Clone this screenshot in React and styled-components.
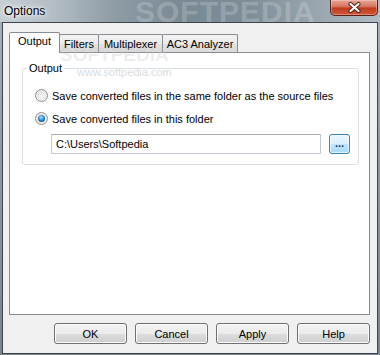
import React from "react";
import styled, { createGlobalStyle } from "styled-components";

const GlobalStyle = createGlobalStyle`
  html, body {
    margin: 0;
    padding: 0;
    background: #7f8f9a;
  }
  body {
    font-family: "Liberation Sans", Arial, sans-serif;
    font-size: 11px;
    color: #000;
  }
`;

const Window = styled.div`
  width: 380px;
  height: 355px;
  display: flex;
  flex-direction: column;
  overflow: hidden;
  background: linear-gradient(180deg, #a7b3bc 0%, #8b99a4 45%, #77858f 100%);
`;

const TitleBar = styled.div`
  position: relative;
  flex: none;
  height: 22px;
  display: flex;
  align-items: flex-start;
  overflow: hidden;
  background: linear-gradient(
    90deg,
    #c6ced4 0%,
    #b3bdc4 14%,
    #8e9ca6 30%,
    #7a8a95 48%,
    #7e8e99 66%,
    #97a4ad 82%,
    #b1bcc3 100%
  );
`;

const Title = styled.div`
  position: relative;
  z-index: 1;
  padding: 4px 0 0 4px;
  font-size: 12px;
  line-height: 14px;
  color: #000;
  text-shadow: 0 0 3px #fff, 0 0 6px rgba(255, 255, 255, 0.9), 0 0 10px rgba(255, 255, 255, 0.7);
`;

const TitleWatermark = styled.div`
  position: absolute;
  left: 135px;
  top: -3px;
  font-size: 30px;
  line-height: 30px;
  font-weight: bold;
  letter-spacing: 1px;
  color: rgba(255, 255, 255, 0.2);
  pointer-events: none;
`;

const CloseButton = styled.div`
  position: relative;
  z-index: 1;
  margin-left: auto;
  margin-right: 2px;
  box-sizing: border-box;
  width: 48px;
  height: 16px;
  border: 1px solid #5a1f14;
  border-top: none;
  border-radius: 0 0 5px 5px;
  background: linear-gradient(180deg, #e7a494 0%, #d77862 42%, #c03b20 55%, #d0583a 100%);
  box-shadow: inset 0 0 0 1px rgba(255, 255, 255, 0.3);
  display: flex;
  align-items: center;
  justify-content: center;
`;

const Client = styled.div`
  position: relative;
  flex: 1;
  margin: 0 2px 1px 2px;
  border: 1px solid #3e464c;
  background: #f0f0f0;
  padding: 9px 7px 9px 6px;
  display: flex;
  flex-direction: column;
  min-height: 0;
`;

const TabStrip = styled.div`
  position: relative;
  z-index: 1;
  flex: none;
  height: 20px;
  display: flex;
  align-items: flex-end;
`;

const Tab = styled.div`
  position: relative;
  z-index: ${(p) => (p.$active ? 2 : 1)};
  box-sizing: border-box;
  width: ${(p) => p.$w}px;
  height: ${(p) => (p.$active ? 21 : 18)}px;
  margin-left: ${(p) => (p.$first ? 0 : -1)}px;
  margin-bottom: ${(p) => (p.$active ? -1 : 0)}px;
  border: 1px solid #898c95;
  border-bottom: none;
  border-radius: 2px 2px 0 0;
  padding-top: ${(p) => (p.$active ? 2 : 3)}px;
  text-align: center;
  line-height: 13px;
  white-space: nowrap;
  background: ${(p) =>
    p.$active ? "#ffffff" : "linear-gradient(180deg, #f2f2f2 0%, #ebebeb 50%, #e2e2e2 51%, #dadada 100%)"};
`;

const StripWatermark = styled.div`
  position: absolute;
  left: 57px;
  top: 22px;
  z-index: 3;
  font-size: 19px;
  line-height: 19px;
  font-weight: bold;
  color: rgba(205, 205, 205, 0.35);
  pointer-events: none;
`;

const Panel = styled.div`
  position: relative;
  flex: 1;
  min-height: 0;
  box-sizing: border-box;
  border: 1px solid #898c95;
  background: #fff;
  padding: 0 10px 0 12px;
`;

const PanelWatermark = styled.div`
  position: absolute;
  left: 67px;
  top: 13px;
  font-size: 11px;
  line-height: 13px;
  color: #dcdcdc;
  pointer-events: none;
`;

const GroupBox = styled.fieldset`
  margin: 9px 0 0 0;
  padding: 0 8px 10px 12px;
  border: 1px solid #d5dfe5;
  border-radius: 3px;
  min-width: 0;
`;

const Legend = styled.legend`
  margin-left: -8px;
  padding: 0 2px;
  font-size: 11px;
  line-height: 13px;
`;

const RadioRow = styled.div`
  display: flex;
  align-items: center;
  gap: 4px;
  height: 17px;
  margin-top: ${(p) => p.$top}px;
  white-space: nowrap;
`;

const Radio = styled.span`
  position: relative;
  flex: none;
  box-sizing: border-box;
  width: 13px;
  height: 13px;
  border-radius: 50%;
  border: 1px solid #8e8f8f;
  background: radial-gradient(circle at 50% 55%, #f7f7f7 0%, #e8e8e8 45%, #c9c9c9 100%);
  box-shadow: inset 0 0 0 1px #f4f4f4;

  &::after {
    content: "";
    display: ${(p) => (p.$checked ? "block" : "none")};
    position: absolute;
    left: 2px;
    top: 2px;
    width: 7px;
    height: 7px;
    border-radius: 50%;
    background: radial-gradient(circle at 45% 35%, #b9e3fb 0%, #3b98d6 40%, #0f5c96 75%, #0b3f6e 100%);
  }
`;

const PathRow = styled.div`
  display: flex;
  align-items: center;
  gap: 8px;
  margin-top: 7px;
  padding-left: 16px;
`;

const TextField = styled.div`
  flex: 1;
  box-sizing: border-box;
  height: 20px;
  padding: 0 4px;
  border: 1px solid #c5cbd2;
  border-top-color: #abadb3;
  background: #fff;
  line-height: 18px;
  white-space: nowrap;
`;

const BrowseButton = styled.div`
  flex: none;
  box-sizing: border-box;
  width: 21px;
  height: 20px;
  border: 1px solid #3c7fb1;
  border-radius: 3px;
  background: linear-gradient(180deg, #eaf6fd 0%, #d9f0fc 48%, #bee6fd 52%, #a7d9f5 100%);
  box-shadow: inset 0 0 0 1px rgba(255, 255, 255, 0.7);
  text-align: center;
  line-height: 17px;
  font-weight: bold;
  color: #1d2a6e;
  letter-spacing: 0;
`;

const ButtonRow = styled.div`
  flex: none;
  display: flex;
  justify-content: flex-end;
  gap: 8px;
  margin-top: 8px;
`;

const Button = styled.div`
  box-sizing: border-box;
  width: 73px;
  height: 21px;
  border: 1px solid #707070;
  border-radius: 3px;
  background: linear-gradient(180deg, #f2f2f2 0%, #ebebeb 50%, #dddddd 51%, #cfcfcf 100%);
  box-shadow: inset 0 0 0 1px #fbfbfb;
  display: flex;
  align-items: center;
  justify-content: center;
`;

const tabs = [
  { label: "Output", w: 51, active: true },
  { label: "Filters", w: 40 },
  { label: "Multiplexer", w: 65 },
  { label: "AC3 Analyzer", w: 76 },
];

export default function App() {
  return (
    <>
      <GlobalStyle />
      <Window>
        <TitleBar>
          <TitleWatermark>SOFTPEDIA</TitleWatermark>
          <Title>Options</Title>
          <CloseButton>
            <svg width="13" height="11" viewBox="0 0 13 11">
              <path d="M2.5 2 L10.5 9 M10.5 2 L2.5 9" stroke="#4a2018" strokeWidth="4" strokeLinecap="round" />
              <path d="M2.5 2 L10.5 9 M10.5 2 L2.5 9" stroke="#ffffff" strokeWidth="2.2" strokeLinecap="round" />
            </svg>
          </CloseButton>
        </TitleBar>
        <Client>
          <TabStrip>
            {tabs.map((t, i) => (
              <Tab key={t.label} $w={t.w} $active={t.active} $first={i === 0}>
                {t.label}
              </Tab>
            ))}
          </TabStrip>
          <StripWatermark>SOFTPEDIA</StripWatermark>
          <Panel>
            <PanelWatermark>www.softpedia.com</PanelWatermark>
            <GroupBox>
              <Legend>Output</Legend>
              <RadioRow $top={12}>
                <Radio />
                <span>Save converted files in the same folder as the source files</span>
              </RadioRow>
              <RadioRow $top={6}>
                <Radio $checked />
                <span>Save converted files in this folder</span>
              </RadioRow>
              <PathRow>
                <TextField>C:\Users\Softpedia</TextField>
                <BrowseButton>...</BrowseButton>
              </PathRow>
            </GroupBox>
          </Panel>
          <ButtonRow>
            <Button>OK</Button>
            <Button>Cancel</Button>
            <Button>Apply</Button>
            <Button>Help</Button>
          </ButtonRow>
        </Client>
      </Window>
    </>
  );
}
